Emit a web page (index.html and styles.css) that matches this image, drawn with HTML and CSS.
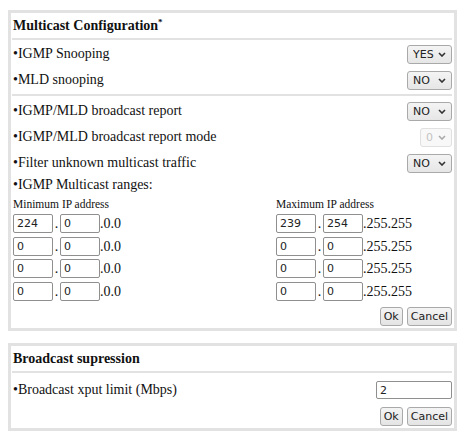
FILE: index.html
```html
<!DOCTYPE html>
<html lang="en">
<head>
    <meta charset="UTF-8">
    <title>Multicast Configuration</title>
    <link rel="stylesheet" href="styles.css">
</head>
<body>

    <div class="panel">
        <div class="title">Multicast Configuration<sup>*</sup></div>

        <div class="group">
            <div class="row">
                <span>&bull;IGMP Snooping</span>
                <span class="sel"><select><option>YES</option><option>NO</option></select><svg viewBox="0 0 8 5"><path d="M1 1 L4 4 L7 1"/></svg></span>
            </div>
            <div class="row">
                <span>&bull;MLD snooping</span>
                <span class="sel"><select><option>NO</option><option>YES</option></select><svg viewBox="0 0 8 5"><path d="M1 1 L4 4 L7 1"/></svg></span>
            </div>
        </div>

        <div class="group second">
            <div class="row">
                <span>&bull;IGMP/MLD broadcast report</span>
                <span class="sel"><select><option>NO</option><option>YES</option></select><svg viewBox="0 0 8 5"><path d="M1 1 L4 4 L7 1"/></svg></span>
            </div>
            <div class="row">
                <span>&bull;IGMP/MLD broadcast report mode</span>
                <span class="sel small disabled"><select disabled><option>0</option></select><svg viewBox="0 0 8 5"><path d="M1 1 L4 4 L7 1"/></svg></span>
            </div>
            <div class="row">
                <span>&bull;Filter unknown multicast traffic</span>
                <span class="sel"><select><option>NO</option><option>YES</option></select><svg viewBox="0 0 8 5"><path d="M1 1 L4 4 L7 1"/></svg></span>
            </div>
            <div class="ranges-label">&bull;IGMP Multicast ranges:</div>

            <div class="ranges">
                <div class="col">
                    <div class="col-head">Minimum IP address</div>
                    <div class="ip"><input type="text" value="224"><span class="dot">.</span><input type="text" value="0"><span class="tail">.0.0</span></div>
                    <div class="ip"><input type="text" value="0"><span class="dot">.</span><input type="text" value="0"><span class="tail">.0.0</span></div>
                    <div class="ip"><input type="text" value="0"><span class="dot">.</span><input type="text" value="0"><span class="tail">.0.0</span></div>
                    <div class="ip"><input type="text" value="0"><span class="dot">.</span><input type="text" value="0"><span class="tail">.0.0</span></div>
                </div>
                <div class="col">
                    <div class="col-head">Maximum IP address</div>
                    <div class="ip"><input type="text" value="239"><span class="dot">.</span><input type="text" value="254"><span class="tail">.255.255</span></div>
                    <div class="ip"><input type="text" value="0"><span class="dot">.</span><input type="text" value="0"><span class="tail">.255.255</span></div>
                    <div class="ip"><input type="text" value="0"><span class="dot">.</span><input type="text" value="0"><span class="tail">.255.255</span></div>
                    <div class="ip"><input type="text" value="0"><span class="dot">.</span><input type="text" value="0"><span class="tail">.255.255</span></div>
                </div>
            </div>

            <div class="buttons">
                <button>Ok</button>
                <button>Cancel</button>
            </div>
        </div>
    </div>

    <div class="panel bottom">
        <div class="title">Broadcast supression</div>
        <div class="group">
            <div class="row tall">
                <span>&bull;Broadcast xput limit (Mbps)</span>
                <input type="text" class="limit" value="2">
            </div>
            <div class="buttons">
                <button>Ok</button>
                <button>Cancel</button>
            </div>
        </div>
    </div>

</body>
</html>
```

FILE: styles.css
```css
body {
    margin: 0;
    padding: 10px 0 0 8px;
    background-color: white;
    font-family: "Liberation Serif", "Times New Roman", serif;
    font-size: 14px;
    color: #111;
}
.panel {
    width: 449px;
    box-sizing: border-box;
    border: 3px solid #e2e2e2;
    padding: 0 2px 0 1px;
}
.panel.bottom {
    margin-top: 12px;
}
.title {
    height: 25px;
    line-height: 25px;
    padding-left: 1px;
    font-weight: bold;
    font-size: 14px;
}
.title sup {
    font-size: 9px;
    line-height: 0;
    vertical-align: 5px;
}
.group {
    border-top: 2px solid #e2e2e2;
    padding: 1px 0 1px;
}
.group.second {
    padding-top: 2px;
}
.row {
    height: 26px;
    display: flex;
    align-items: center;
    justify-content: space-between;
    padding-left: 1px;
}
.row.tall {
    height: 28px;
    margin-top: 2px;
}

/* selects */
.sel {
    position: relative;
    display: inline-block;
    width: 45px;
    height: 19px;
}
.sel select {
    -webkit-appearance: none;
    appearance: none;
    width: 100%;
    height: 100%;
    box-sizing: border-box;
    margin: 0;
    padding: 0 0 0 5px;
    border: 1px solid #a9a9a9;
    border-radius: 3px;
    background: linear-gradient(#f4f4f4, #e6e6e6);
    font-family: "DejaVu Sans", Tahoma, sans-serif;
    font-size: 11px;
    color: #222;
}
.sel svg {
    position: absolute;
    right: 6px;
    top: 7px;
    width: 8px;
    height: 5px;
    fill: none;
    stroke: #333;
    stroke-width: 1.6;
}
.sel.small {
    width: 32px;
}
.sel.disabled select {
    color: #aaa;
    border-color: #d3d3d3;
    background: #f6f6f6;
}
.sel.disabled svg {
    stroke: #aaa;
}

.ranges-label {
    height: 18px;
    line-height: 18px;
    padding-left: 1px;
}
.ranges {
    display: flex;
    padding-left: 1px;
}
.col {
    flex: 0 0 263px;
}
.col + .col {
    flex: 1 1 auto;
    min-width: 0;
}
.col-head {
    height: 20px;
    line-height: 20px;
    font-size: 11.5px;
}
.ip {
    height: 22.5px;
    display: flex;
    align-items: flex-start;
}
.ip input, .limit {
    width: 40px;
    height: 19px;
    box-sizing: border-box;
    margin: 0;
    padding: 0 0 0 3px;
    border: 1px solid #8f8f8f;
    border-radius: 2px;
    font-family: "DejaVu Sans", Tahoma, sans-serif;
    font-size: 11px;
    color: #222;
}
.dot {
    width: 7px;
    line-height: 19px;
    text-align: center;
}
.tail {
    line-height: 19px;
    font-size: 14px;
}
.limit {
    width: 76px;
    height: 18px;
}

.buttons {
    display: flex;
    justify-content: flex-end;
    gap: 4px;
    margin-top: 3px;
    height: 20px;
}
button {
    height: 19px;
    padding: 0 3px;
    margin: 0;
    border: 1px solid #a9a9a9;
    border-radius: 3px;
    background: linear-gradient(#f4f4f4, #e4e4e4);
    font-family: "DejaVu Sans", Tahoma, sans-serif;
    font-size: 11px;
    color: #222;
}
```
